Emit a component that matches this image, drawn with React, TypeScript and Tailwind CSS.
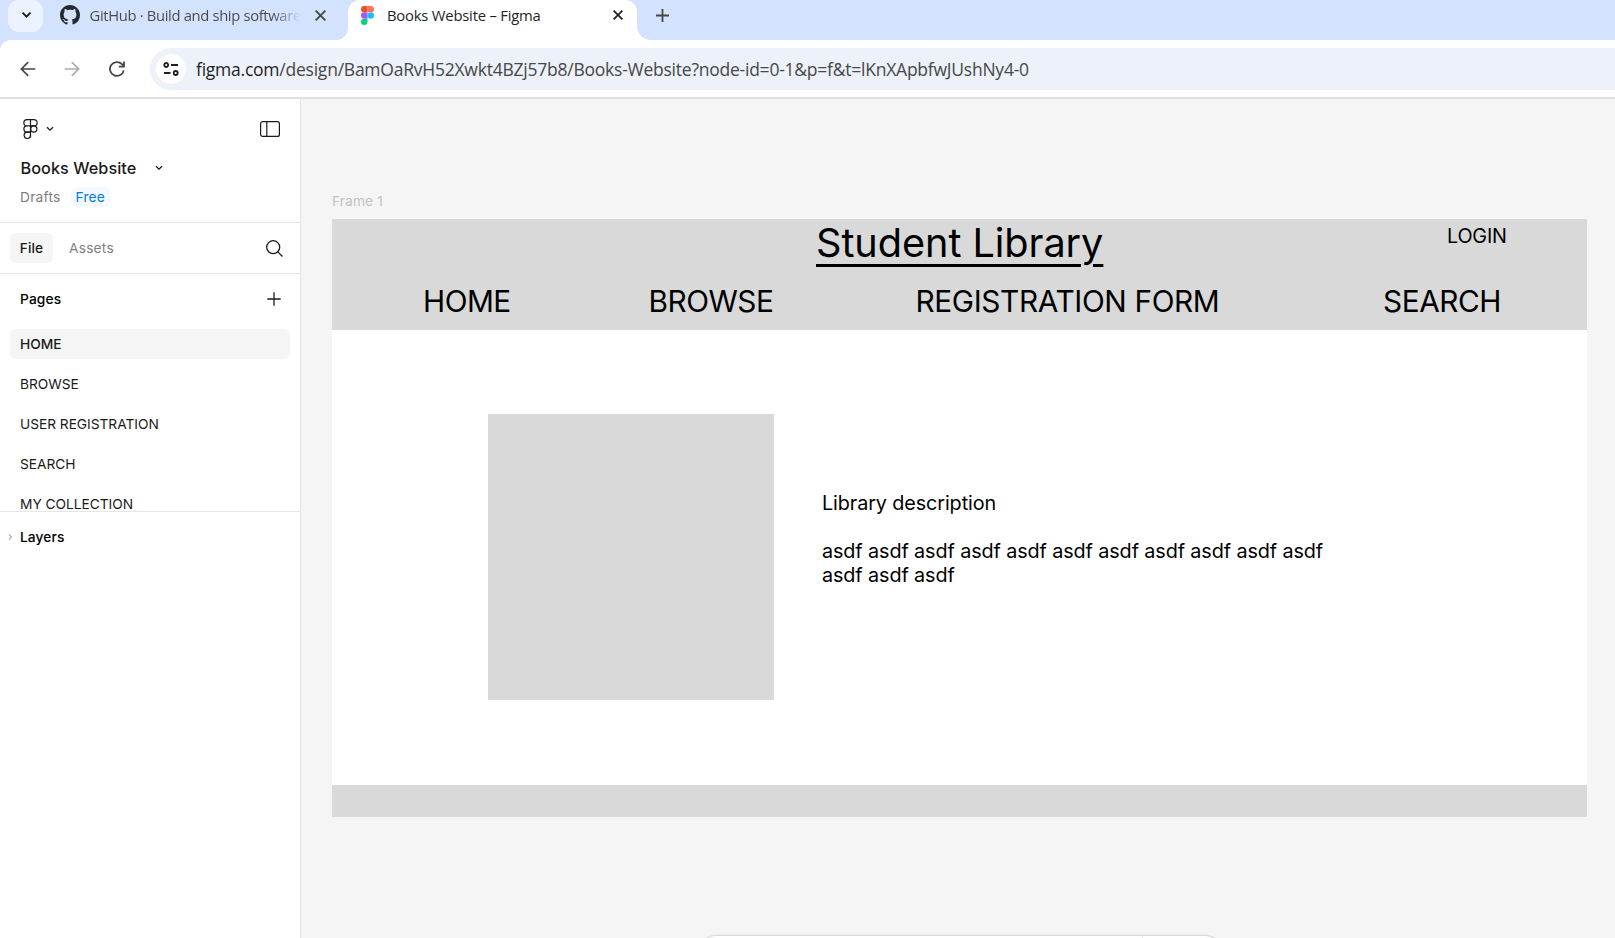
import type { ReactNode } from "react";

function Chevron({ className, strokeWidth = 1.3 }: { className?: string; strokeWidth?: number }) {
  return (
    <svg viewBox="0 0 8 6" className={className} fill="none" stroke="currentColor" strokeWidth={strokeWidth}>
      <path d="M1 1.2 4 4.2 7 1.2" />
    </svg>
  );
}

function Cross({ className }: { className?: string }) {
  return (
    <svg viewBox="0 0 10 10" className={className} fill="none" stroke="currentColor" strokeWidth="1.7">
      <path d="m.6.6 8.8 8.8M9.4.6.6 9.4" />
    </svg>
  );
}

function GitHubMark() {
  return (
    <svg viewBox="0 0 16 16" className="h-5 w-5 shrink-0" fill="#24292f">
      <path d="M8 0C3.58 0 0 3.58 0 8c0 3.54 2.29 6.53 5.47 7.59.4.07.55-.17.55-.38 0-.19-.01-.82-.01-1.49-2.01.37-2.53-.49-2.69-.94-.09-.23-.48-.94-.82-1.13-.28-.15-.68-.52-.01-.53.63-.01 1.08.58 1.23.82.72 1.21 1.87.87 2.33.66.07-.52.28-.87.51-1.07-1.78-.2-3.64-.89-3.64-3.95 0-.87.31-1.59.82-2.15-.08-.2-.36-1.02.08-2.12 0 0 .67-.21 2.2.82.64-.18 1.32-.27 2-.27s1.36.09 2 .27c1.53-1.04 2.2-.82 2.2-.82.44 1.1.16 1.92.08 2.12.51.56.82 1.27.82 2.15 0 3.07-1.87 3.75-3.65 3.95.29.25.54.73.54 1.48 0 1.07-.01 1.93-.01 2.2 0 .21.15.46.55.38A8.01 8.01 0 0 0 16 8c0-4.42-3.58-8-8-8z" />
    </svg>
  );
}

function FigmaFavicon() {
  return (
    <svg viewBox="0 0 12 18" className="h-[19px] w-[13px] shrink-0" preserveAspectRatio="none">
      <path d="M3 0h3v6H3a3 3 0 0 1 0-6z" fill="#f24e1e" />
      <path d="M6 0h3a3 3 0 0 1 0 6H6z" fill="#ff7262" />
      <path d="M3 6h3v6H3a3 3 0 0 1 0-6z" fill="#a259ff" />
      <circle cx="9" cy="9" r="3" fill="#1abcfe" />
      <path d="M3 12h3v3a3 3 0 1 1-3-3z" fill="#0acf83" />
    </svg>
  );
}

function TabStrip() {
  return (
    <header className="flex h-10 w-full shrink-0 bg-[#d3e3fd]">
      <div className="ml-2 flex h-8 w-[35px] shrink-0 items-center justify-center rounded-[11px] bg-[#ecf2fe] text-[#1f1f1f]">
        <Chevron className="mt-[-2px] ml-px h-[8px] w-[11px]" strokeWidth={1.5} />
      </div>
      <div className="flex h-[30px] w-[293px] shrink-0 items-center pl-[17px] text-[#474747]">
        <GitHubMark />
        <span className="ml-[9.5px] w-[211px] overflow-hidden whitespace-nowrap bg-linear-to-r from-[#474747] from-86% to-[#47474700] bg-clip-text text-[14.8px] tracking-[-0.35px] text-transparent">
          GitHub · Build and ship software
        </span>
        <Cross className="ml-[14px] h-[11px] w-[11px]" />
      </div>
      <svg viewBox="0 0 12 12" className="h-3 w-3 shrink-0 self-end" fill="#fff">
        <path d="M12 0v12H0A12 12 0 0 0 12 0z" />
      </svg>
      <div className="flex h-10 w-[289px] shrink-0 items-center rounded-t-[12px] bg-white pb-[10px] pl-[13px] text-[#1f1f1f]">
        <FigmaFavicon />
        <span className="ml-[13px] w-[212px] whitespace-nowrap text-[14.8px] tracking-[-0.2px]">Books Website – Figma</span>
        <Cross className="ml-[14px] h-[10px] w-[10px]" />
      </div>
      <svg viewBox="0 0 14 14" className="h-[14px] w-[14px] shrink-0 self-end" fill="#fff">
        <path d="M0 0v14h14A14 14 0 0 1 0 0z" />
      </svg>
      <svg viewBox="0 0 13 13" className="mt-[9px] ml-[5px] h-[13px] w-[13px]" stroke="#474747" strokeWidth="1.8">
        <path d="M6.5 0v13M0 6.5h13" />
      </svg>
    </header>
  );
}

function AddressBar() {
  return (
    <div className="flex h-[57px] w-full shrink-0 bg-[#d3e3fd]">
      <div className="flex flex-1 items-center rounded-tl-[11px] bg-white">
        <svg viewBox="0 0 16 16" className="ml-5 h-4 w-4" fill="none" stroke="#474747" strokeWidth="1.7">
          <path d="M15.3 8H1.6M8.2 1.2 1.4 8l6.8 6.8" />
        </svg>
        <svg viewBox="0 0 16 16" className="ml-[28px] h-4 w-4" fill="none" stroke="#acacac" strokeWidth="1.7">
          <path d="M.7 8h13.7M7.8 1.2 14.6 8l-6.8 6.8" />
        </svg>
        <svg viewBox="0 0 16 16" className="ml-[29px] h-4 w-4" fill="none" stroke="#474747" strokeWidth="1.8">
          <path d="M14.7 9.3A6.9 6.9 0 1 1 12.9 3.2L15 5.4M15 .4v5.3H9.8" />
        </svg>
        <div className="ml-[25px] flex h-[42px] flex-1 items-center rounded-l-full bg-[#ecf1fa] pl-[6px]">
          <div className="flex h-[30px] w-[30px] items-center justify-center rounded-full bg-white">
            <svg viewBox="0 0 16 14" className="h-[14px] w-4" fill="none" stroke="#1f1f1f" strokeWidth="1.8">
              <circle cx="3.2" cy="3" r="2" />
              <path d="M8 3h7M1 11h6.5" />
              <circle cx="12.7" cy="11" r="2" />
            </svg>
          </div>
          <span className="ml-[10px] whitespace-nowrap pt-[2px] text-[17.5px] tracking-[-0.235px] text-[#474747]">
            <span className="text-[#1f1f1f]">figma.com</span>/design/BamOaRvH52Xwkt4BZj57b8/Books-Website?node-id=0-1&amp;p=f&amp;t=lKnXApbfwJUshNy4-0
          </span>
        </div>
      </div>
    </div>
  );
}

function PageRow({ children, active }: { children: ReactNode; active?: boolean }) {
  return (
    <li
      className={
        active
          ? "flex h-[30px] shrink-0 items-center rounded-[6px] bg-[#f5f5f5] pl-[10px] font-[550]"
          : "flex h-[30px] shrink-0 items-center pl-[10px]"
      }
    >
      {children}
    </li>
  );
}

function Sidebar() {
  return (
    <aside className="flex w-[301px] shrink-0 flex-col border-r border-[#e6e6e6] bg-white font-[Inter,sans-serif] text-[13.75px] text-[#1a1a1a]">
      <div className="flex h-[124px] shrink-0 flex-col border-b border-[#e6e6e6]">
        <div className="mt-5 flex h-5 items-center pl-[23px] pr-5">
          <svg viewBox="0 0 15 20" className="h-5 w-[15px]" fill="none" stroke="currentColor" strokeWidth="1.2">
            <path d="M7.5.6v18M7.5.6H4a3.1 3.1 0 0 0 0 6.3h7A3.1 3.1 0 0 0 11 .6zM7.5 6.9H4a3.1 3.1 0 0 0 0 6.2h3.5" />
            <path d="M7.5 13.1H4a3.2 3.2 0 1 0 3.5 3.2" />
            <circle cx="10.8" cy="10" r="3.1" />
          </svg>
          <Chevron className="ml-[8px] h-[6px] w-[8px]" />
          <svg viewBox="0 0 20 16" className="ml-auto h-4 w-5" fill="none" stroke="currentColor" strokeWidth="1.2">
            <rect x=".6" y=".6" width="18.8" height="14.8" rx="2" />
            <path d="M6.8.6v14.8" />
          </svg>
        </div>
        <div className="mt-[19px] flex h-5 items-center pl-[20.5px]">
          <span className="font-[550] text-[16.25px] tracking-[0.04px]">Books Website</span>
          <Chevron className="ml-[19px] h-[6px] w-[8px]" />
        </div>
        <div className="mt-[9px] flex h-5 items-center pl-5">
          <span className="tracking-[0.25px] text-[#808080]">Drafts</span>
          <span className="ml-[10px] flex h-5 items-center rounded-[6px] bg-[#f2f9ff] px-[5px] tracking-[0.2px] text-[#007be5]">Free</span>
        </div>
      </div>
      <div className="flex h-[51px] shrink-0 items-center border-b border-[#e6e6e6] pl-[10px] pr-[17px]">
        <span className="flex h-[30px] w-[43px] items-center justify-center rounded-[6px] bg-[#f5f5f5] font-[550] tracking-[0.1px]">File</span>
        <span className="ml-4 tracking-[0.2px] text-[#808080]">Assets</span>
        <svg viewBox="0 0 17 17" className="ml-auto h-[17px] w-[17px]" fill="none" stroke="currentColor" strokeWidth="1.3">
          <circle cx="7.2" cy="7.2" r="6.5" />
          <path d="m11.9 11.9 4.6 4.6" />
        </svg>
      </div>
      <div className="flex h-[50px] shrink-0 items-center pl-5 pr-[19px]">
        <span className="pt-px font-[550] tracking-[0.12px] text-black">Pages</span>
        <svg viewBox="0 0 14 14" className="ml-auto h-[14px] w-[14px]" stroke="currentColor" strokeWidth="1.3">
          <path d="M7 .3v13.4M.3 7h13.4" />
        </svg>
      </div>
      <ul className="flex h-[187px] shrink-0 flex-col gap-[10px] overflow-hidden px-[10px] pt-[5px] tracking-[-0.04px]">
        <PageRow active>HOME</PageRow>
        <PageRow>BROWSE</PageRow>
        <PageRow>USER REGISTRATION</PageRow>
        <PageRow>SEARCH</PageRow>
        <PageRow>MY COLLECTION</PageRow>
      </ul>
      <div className="flex h-[51px] shrink-0 items-center border-t border-[#e6e6e6] pl-[7px]">
        <Chevron className="h-[6px] w-[7px] -rotate-90 text-[#a8a8a8]" />
        <span className="ml-[6px] font-[550] tracking-[0.1px] text-black">Layers</span>
      </div>
    </aside>
  );
}

function Canvas() {
  return (
    <main className="relative flex-1 overflow-hidden bg-[#f5f5f5] font-[Inter,sans-serif] text-black">
      <div className="absolute top-[92px] left-[31px] text-[13.75px] leading-5 tracking-[0.1px] text-[#c2c2c2]">Frame 1</div>
      <div className="absolute top-[120px] left-[31px] h-[597.5px] w-[1255px] bg-white">
        <div className="absolute top-0 left-0 h-[111px] w-full bg-[#d9d9d9]" />
        <div className="absolute top-0 left-[484px] whitespace-nowrap text-[39.7px] leading-[48px] tracking-[-0.07px] underline decoration-[3px] underline-offset-[7px]">
          Student Library
        </div>
        <div className="absolute top-[5px] left-[1115px] text-[19.8px] leading-6 tracking-[-0.2px]">LOGIN</div>
        <div className="absolute top-[64px] left-[91px] text-[29.8px] leading-9 tracking-[-0.5px]">HOME</div>
        <div className="absolute top-[64px] left-[316.5px] text-[29.8px] leading-9 tracking-[-0.5px]">BROWSE</div>
        <div className="absolute top-[64px] left-[583.5px] whitespace-nowrap text-[29.8px] leading-9 tracking-[-0.37px]">REGISTRATION FORM</div>
        <div className="absolute top-[64px] left-[1051px] text-[29.8px] leading-9 tracking-[-0.45px]">SEARCH</div>
        <div className="absolute top-[195px] left-[156px] h-[286px] w-[286px] bg-[#d9d9d9]" />
        <div className="absolute top-[273px] left-[490px] w-[530px] text-[19.8px] leading-[23.85px] tracking-[-0.1px]">
          <p>Library description</p>
          <p className="mt-[23.85px]">
            asdf asdf asdf asdf asdf asdf asdf asdf asdf asdf asdf
            <br />
            asdf asdf asdf
          </p>
        </div>
        <div className="absolute bottom-0 left-0 h-[32px] w-full bg-[#d9d9d9]" />
      </div>
      <div className="absolute top-[837px] left-[399px] flex h-[60px] w-[521px] rounded-[16px] bg-white shadow-[0_0_1px_0.5px_rgba(0,0,0,0.1),0_1px_4px_rgba(0,0,0,0.1)]">
        <div className="ml-[442px] w-px bg-[#e6e6e6]" />
      </div>
    </main>
  );
}

export default function App() {
  return (
    <div className="flex h-[938px] w-[1615px] flex-col overflow-hidden bg-white font-['Open_Sans',sans-serif]">
      <TabStrip />
      <AddressBar />
      <div className="flex min-h-0 flex-1 border-t-2 border-[#e0e0e0]">
        <Sidebar />
        <Canvas />
      </div>
    </div>
  );
}
